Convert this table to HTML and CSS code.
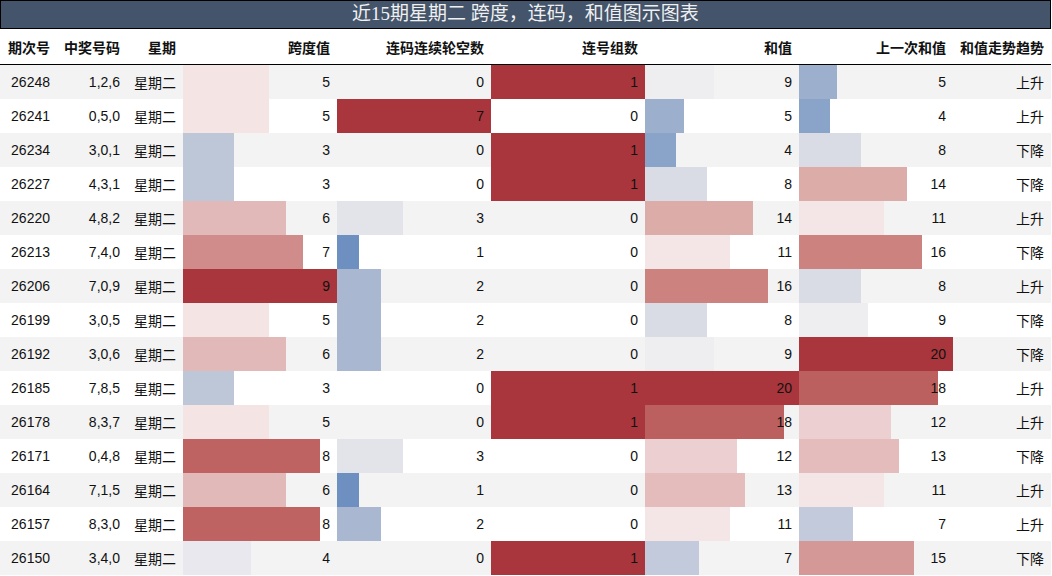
FILE: index.html
```html
<!DOCTYPE html>
<html lang="zh">
<head>
<meta charset="utf-8">
<link rel="stylesheet" href="styles.css">
</head>
<body>
<div class="sheet">
  <div class="title">近15期星期二 跨度，连码，和值图示图表</div>
  <div class="row head">
    <div class="c">期次号</div><div class="c">中奖号码</div><div class="c">星期</div><div class="c">跨度值</div><div class="c">连码连续轮空数</div><div class="c">连号组数</div><div class="c">和值</div><div class="c">上一次和值</div><div class="c">和值走势趋势</div>
  </div>
  <div class="row">
    <div class="c">26248</div><div class="c">1,2,6</div><div class="c">星期二</div>
    <div class="c bar" style="--w:55.56%;--k:#f4e4e4">5</div>
    <div class="c bar" style="--w:0%;--k:transparent">0</div>
    <div class="c bar" style="--w:100%;--k:#a8363c">1</div>
    <div class="c bar" style="--w:45%;--k:#eeeef1">9</div>
    <div class="c bar" style="--w:25%;--k:#9cafcd">5</div>
    <div class="c">上升</div>
  </div>
  <div class="row">
    <div class="c">26241</div><div class="c">0,5,0</div><div class="c">星期二</div>
    <div class="c bar" style="--w:55.56%;--k:#f4e4e4">5</div>
    <div class="c bar" style="--w:100%;--k:#a8363c">7</div>
    <div class="c bar" style="--w:0%;--k:transparent">0</div>
    <div class="c bar" style="--w:25%;--k:#9cafcd">5</div>
    <div class="c bar" style="--w:20%;--k:#8aa3c8">4</div>
    <div class="c">上升</div>
  </div>
  <div class="row">
    <div class="c">26234</div><div class="c">3,0,1</div><div class="c">星期二</div>
    <div class="c bar" style="--w:33.33%;--k:#bdc7d8">3</div>
    <div class="c bar" style="--w:0%;--k:transparent">0</div>
    <div class="c bar" style="--w:100%;--k:#a8363c">1</div>
    <div class="c bar" style="--w:20%;--k:#8aa3c8">4</div>
    <div class="c bar" style="--w:40%;--k:#d9dce5">8</div>
    <div class="c">下降</div>
  </div>
  <div class="row">
    <div class="c">26227</div><div class="c">4,3,1</div><div class="c">星期二</div>
    <div class="c bar" style="--w:33.33%;--k:#bdc7d8">3</div>
    <div class="c bar" style="--w:0%;--k:transparent">0</div>
    <div class="c bar" style="--w:100%;--k:#a8363c">1</div>
    <div class="c bar" style="--w:40%;--k:#d9dce5">8</div>
    <div class="c bar" style="--w:70%;--k:#dcaca9">14</div>
    <div class="c">下降</div>
  </div>
  <div class="row">
    <div class="c">26220</div><div class="c">4,8,2</div><div class="c">星期二</div>
    <div class="c bar" style="--w:66.67%;--k:#e1b9b8">6</div>
    <div class="c bar" style="--w:42.86%;--k:#e3e4ea">3</div>
    <div class="c bar" style="--w:0%;--k:transparent">0</div>
    <div class="c bar" style="--w:70%;--k:#dcaca9">14</div>
    <div class="c bar" style="--w:55%;--k:#f4e6e6">11</div>
    <div class="c">上升</div>
  </div>
  <div class="row">
    <div class="c">26213</div><div class="c">7,4,0</div><div class="c">星期二</div>
    <div class="c bar" style="--w:77.78%;--k:#d08b8b">7</div>
    <div class="c bar" style="--w:14.29%;--k:#6e90c0">1</div>
    <div class="c bar" style="--w:0%;--k:transparent">0</div>
    <div class="c bar" style="--w:55%;--k:#f4e6e6">11</div>
    <div class="c bar" style="--w:80%;--k:#cc8380">16</div>
    <div class="c">下降</div>
  </div>
  <div class="row">
    <div class="c">26206</div><div class="c">7,0,9</div><div class="c">星期二</div>
    <div class="c bar" style="--w:100%;--k:#a8363c">9</div>
    <div class="c bar" style="--w:28.57%;--k:#a9b8d0">2</div>
    <div class="c bar" style="--w:0%;--k:transparent">0</div>
    <div class="c bar" style="--w:80%;--k:#cc8380">16</div>
    <div class="c bar" style="--w:40%;--k:#d9dce5">8</div>
    <div class="c">上升</div>
  </div>
  <div class="row">
    <div class="c">26199</div><div class="c">3,0,5</div><div class="c">星期二</div>
    <div class="c bar" style="--w:55.56%;--k:#f4e4e4">5</div>
    <div class="c bar" style="--w:28.57%;--k:#a9b8d0">2</div>
    <div class="c bar" style="--w:0%;--k:transparent">0</div>
    <div class="c bar" style="--w:40%;--k:#d9dce5">8</div>
    <div class="c bar" style="--w:45%;--k:#eeeef1">9</div>
    <div class="c">下降</div>
  </div>
  <div class="row">
    <div class="c">26192</div><div class="c">3,0,6</div><div class="c">星期二</div>
    <div class="c bar" style="--w:66.67%;--k:#e1b9b8">6</div>
    <div class="c bar" style="--w:28.57%;--k:#a9b8d0">2</div>
    <div class="c bar" style="--w:0%;--k:transparent">0</div>
    <div class="c bar" style="--w:45%;--k:#eeeef1">9</div>
    <div class="c bar" style="--w:100%;--k:#a8363c">20</div>
    <div class="c">下降</div>
  </div>
  <div class="row">
    <div class="c">26185</div><div class="c">7,8,5</div><div class="c">星期二</div>
    <div class="c bar" style="--w:33.33%;--k:#bdc7d8">3</div>
    <div class="c bar" style="--w:0%;--k:transparent">0</div>
    <div class="c bar" style="--w:100%;--k:#a8363c">1</div>
    <div class="c bar" style="--w:100%;--k:#a8363c">20</div>
    <div class="c bar" style="--w:90%;--k:#bc5f5f">18</div>
    <div class="c">上升</div>
  </div>
  <div class="row">
    <div class="c">26178</div><div class="c">8,3,7</div><div class="c">星期二</div>
    <div class="c bar" style="--w:55.56%;--k:#f4e4e4">5</div>
    <div class="c bar" style="--w:0%;--k:transparent">0</div>
    <div class="c bar" style="--w:100%;--k:#a8363c">1</div>
    <div class="c bar" style="--w:90%;--k:#bc5f5f">18</div>
    <div class="c bar" style="--w:60%;--k:#eccfd0">12</div>
    <div class="c">上升</div>
  </div>
  <div class="row">
    <div class="c">26171</div><div class="c">0,4,8</div><div class="c">星期二</div>
    <div class="c bar" style="--w:88.89%;--k:#be6262">8</div>
    <div class="c bar" style="--w:42.86%;--k:#e3e4ea">3</div>
    <div class="c bar" style="--w:0%;--k:transparent">0</div>
    <div class="c bar" style="--w:60%;--k:#eccfd0">12</div>
    <div class="c bar" style="--w:65%;--k:#e4bcbc">13</div>
    <div class="c">下降</div>
  </div>
  <div class="row">
    <div class="c">26164</div><div class="c">7,1,5</div><div class="c">星期二</div>
    <div class="c bar" style="--w:66.67%;--k:#e1b9b8">6</div>
    <div class="c bar" style="--w:14.29%;--k:#6e90c0">1</div>
    <div class="c bar" style="--w:0%;--k:transparent">0</div>
    <div class="c bar" style="--w:65%;--k:#e4bcbc">13</div>
    <div class="c bar" style="--w:55%;--k:#f4e6e6">11</div>
    <div class="c">上升</div>
  </div>
  <div class="row">
    <div class="c">26157</div><div class="c">8,3,0</div><div class="c">星期二</div>
    <div class="c bar" style="--w:88.89%;--k:#be6262">8</div>
    <div class="c bar" style="--w:28.57%;--k:#a9b8d0">2</div>
    <div class="c bar" style="--w:0%;--k:transparent">0</div>
    <div class="c bar" style="--w:55%;--k:#f4e6e6">11</div>
    <div class="c bar" style="--w:35%;--k:#c2cadb">7</div>
    <div class="c">上升</div>
  </div>
  <div class="row">
    <div class="c">26150</div><div class="c">3,4,0</div><div class="c">星期二</div>
    <div class="c bar" style="--w:44.44%;--k:#e8e8ee">4</div>
    <div class="c bar" style="--w:0%;--k:transparent">0</div>
    <div class="c bar" style="--w:100%;--k:#a8363c">1</div>
    <div class="c bar" style="--w:35%;--k:#c2cadb">7</div>
    <div class="c bar" style="--w:75%;--k:#d49896">15</div>
    <div class="c">下降</div>
  </div>
</div>
</body>
</html>
```
FILE: styles.css
```css
html, body {
  margin: 0;
  padding: 0;
  background: #ffffff;
}
body {
  font-family: "Liberation Sans", "Noto Sans CJK SC", sans-serif;
  font-size: 14px;
  color: #111111;
}
.sheet {
  width: 1051px;
}
.title {
  box-sizing: border-box;
  width: 1051px;
  height: 29px;
  border: 1px solid #000000;
  background: #44546a;
  color: #f0f0f0;
  font-family: "Liberation Serif", "Noto Sans CJK SC", serif;
  font-size: 19px;
  line-height: 26px;
  text-align: center;
}
.row {
  display: grid;
  grid-template-columns: 57px 70px 56px 154px 154px 154px 154px 154px 98px;
  height: 34px;
}
.row:nth-child(odd) {
  background: #f3f3f3;
}
.row.head {
  height: 35px;
  border-bottom: 1px solid #000000;
  background: #ffffff;
  font-weight: bold;
}
.c {
  display: flex;
  align-items: center;
  justify-content: flex-end;
  padding: 0 7px;
  white-space: nowrap;
}
.bar {
  background: linear-gradient(90deg, var(--k) 0, var(--k) var(--w), transparent var(--w));
}
```
